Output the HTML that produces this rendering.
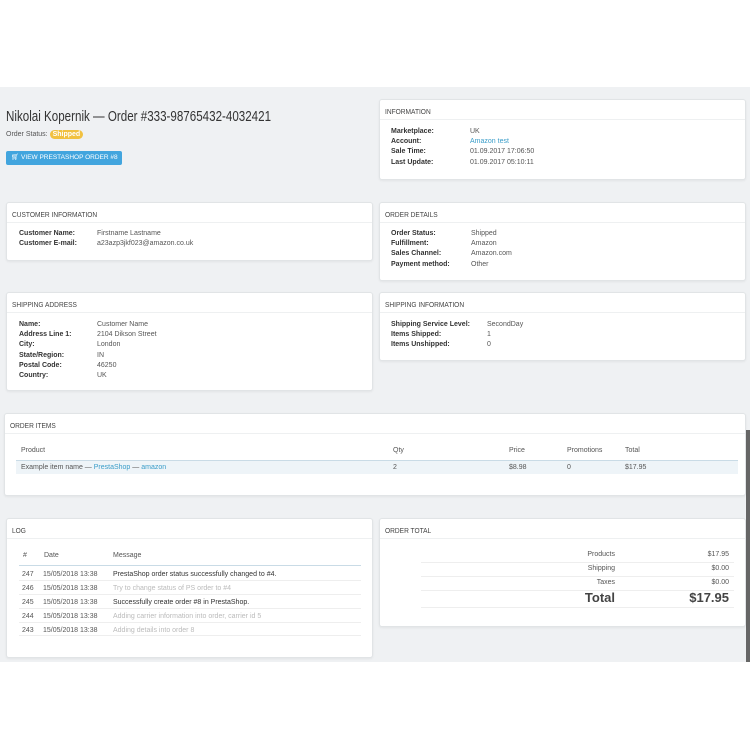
<!DOCTYPE html>
<html><head><style>
*{margin:0;padding:0;box-sizing:border-box}
body{width:750px;height:750px;background:#fff;font-family:"Liberation Sans",sans-serif;color:#555;position:relative;overflow:hidden}
.bg{position:absolute;left:0;top:87px;width:750px;height:575px;background:#eff1f3}
.p{position:absolute;background:#fff;border:1px solid #e1e4e6;border-radius:3px;box-shadow:0 1px 2px rgba(0,0,0,.06)}
.h{position:absolute;left:5px;top:7px;font-size:7.5px;color:#444;transform:scaleX(.88);transform-origin:0 0;white-space:nowrap}
.hl{position:absolute;left:0;right:0;top:19px;border-top:1px solid #eef0f1}
.t{position:absolute;font-size:7px;line-height:10.2px;white-space:nowrap}
.b{font-weight:bold;color:#333}
a{color:#3a9dc9;text-decoration:none}
.sb{position:absolute;left:746px;top:430px;width:4px;height:232px;background:#666}
</style></head><body>
<div class="bg"></div>
<div class="sb"></div>
<div class="t" style="left:6px;top:108px;font-size:14.5px;line-height:18px;color:#333;transform:scaleX(.8);transform-origin:0 0">Nikolai Kopernik — Order #333-98765432-4032421</div>
<div class="t" style="left:6px;top:130px;font-size:7px">Order Status: <span style="background:#f1c141;color:#fff;border-radius:6px;padding:1px 3px;font-weight:bold">Shipped</span></div>
<div style="position:absolute;left:6px;top:151px;width:116px;height:14px;background:#42a5de;border-radius:2px;color:#fff;font-size:6.5px;line-height:14px;padding-left:5px;white-space:nowrap">&#x1F6D2;&#xFE0E; VIEW PRESTASHOP ORDER #8</div>

<div class="p" style="left:379px;top:99px;width:367px;height:81px"><div class="h">INFORMATION</div><div class="hl"></div>
<div class="t b" style="left:11px;top:27px">Marketplace:<br>Account:<br>Sale Time:<br>Last Update:</div>
<div class="t" style="left:90px;top:27px">UK<br><a>Amazon test</a><br>01.09.2017 17:06:50<br>01.09.2017 05:10:11</div></div>

<div class="p" style="left:6px;top:202px;width:367px;height:59px"><div class="h">CUSTOMER INFORMATION</div><div class="hl"></div>
<div class="t b" style="left:12px;top:26px">Customer Name:<br>Customer E-mail:</div>
<div class="t" style="left:90px;top:26px">Firstname Lastname<br>a23azp3jkf023@amazon.co.uk</div></div>

<div class="p" style="left:379px;top:202px;width:367px;height:79px"><div class="h">ORDER DETAILS</div><div class="hl"></div>
<div class="t b" style="left:11px;top:26px">Order Status:<br>Fulfillment:<br>Sales Channel:<br>Payment method:</div>
<div class="t" style="left:91px;top:26px">Shipped<br>Amazon<br>Amazon.com<br>Other</div></div>

<div class="p" style="left:6px;top:292px;width:367px;height:99px"><div class="h">SHIPPING ADDRESS</div><div class="hl"></div>
<div class="t b" style="left:12px;top:27px">Name:<br>Address Line 1:<br>City:<br>State/Region:<br>Postal Code:<br>Country:</div>
<div class="t" style="left:90px;top:27px">Customer Name<br>2104 Dikson Street<br>London<br>IN<br>46250<br>UK</div></div>

<div class="p" style="left:379px;top:292px;width:367px;height:69px"><div class="h">SHIPPING INFORMATION</div><div class="hl"></div>
<div class="t b" style="left:11px;top:27px">Shipping Service Level:<br>Items Shipped:<br>Items Unshipped:</div>
<div class="t" style="left:107px;top:27px">SecondDay<br>1<br>0</div></div>

<div class="p" style="left:4px;top:413px;width:742px;height:83px"><div class="h">ORDER ITEMS</div><div class="hl"></div>
<div style="position:absolute;left:11px;top:46px;width:722px;height:14px;background:#eef4f8;border-top:1px solid #c9dbe6"></div>
<div class="t" style="left:16px;top:32px">Product</div><div class="t" style="left:388px;top:32px">Qty</div><div class="t" style="left:504px;top:32px">Price</div><div class="t" style="left:562px;top:32px">Promotions</div><div class="t" style="left:620px;top:32px">Total</div>
<div class="t" style="left:16px;top:49px">Example item name — <a>PrestaShop</a> — <a>amazon</a></div><div class="t" style="left:388px;top:49px">2</div><div class="t" style="left:504px;top:49px">$8.98</div><div class="t" style="left:562px;top:49px">0</div><div class="t" style="left:620px;top:49px">$17.95</div></div>

<div class="p" style="left:6px;top:518px;width:367px;height:140px"><div class="h">LOG</div><div class="hl"></div>
<div style="position:absolute;left:12px;top:46px;width:342px;border-top:1px solid #c9dbe6"></div>
<div class="t" style="left:16px;top:32px">#</div><div class="t" style="left:37px;top:32px">Date</div><div class="t" style="left:106px;top:32px">Message</div>
<div class="t" style="left:15px;top:49px;line-height:14px">247<br>246<br>245<br>244<br>243</div>
<div class="t" style="left:36px;top:49px;line-height:14px">15/05/2018 13:38<br>15/05/2018 13:38<br>15/05/2018 13:38<br>15/05/2018 13:38<br>15/05/2018 13:38</div>
<div class="t" style="left:106px;top:49px;line-height:14px;color:#333">PrestaShop order status successfully changed to #4.<br><span style="color:#bbb">Try to change status of PS order to #4</span><br>Successfully create order #8 in PrestaShop.<br><span style="color:#bbb">Adding carrier information into order, carrier id 5</span><br><span style="color:#bbb">Adding details into order 8</span></div>
<div style="position:absolute;left:12px;top:61px;width:342px;height:56px;border-top:1px solid #eee;border-bottom:1px solid #eee;background:linear-gradient(#eee,#eee) 0 13px/100% 1px no-repeat,linear-gradient(#eee,#eee) 0 27px/100% 1px no-repeat,linear-gradient(#eee,#eee) 0 41px/100% 1px no-repeat"></div></div>

<div class="p" style="left:379px;top:518px;width:367px;height:109px"><div class="h">ORDER TOTAL</div><div class="hl"></div>
<div style="position:absolute;left:41px;top:30px;width:313px;height:70px;background:linear-gradient(#eee,#eee) 0 13px/100% 1px no-repeat,linear-gradient(#eee,#eee) 0 27px/100% 1px no-repeat,linear-gradient(#eee,#eee) 0 41px/100% 1px no-repeat,linear-gradient(#eee,#eee) 0 58px/100% 1px no-repeat"></div>
<div class="t" style="right:130px;top:29px;line-height:14px;text-align:right">Products<br>Shipping<br>Taxes</div>
<div class="t" style="right:16px;top:29px;line-height:14px;text-align:right">$17.95<br>$0.00<br>$0.00</div>
<div class="t b" style="right:130px;top:71px;font-size:13px;line-height:16px;color:#444">Total</div>
<div class="t b" style="right:16px;top:71px;font-size:13px;line-height:16px;color:#444">$17.95</div></div>
</body></html>
